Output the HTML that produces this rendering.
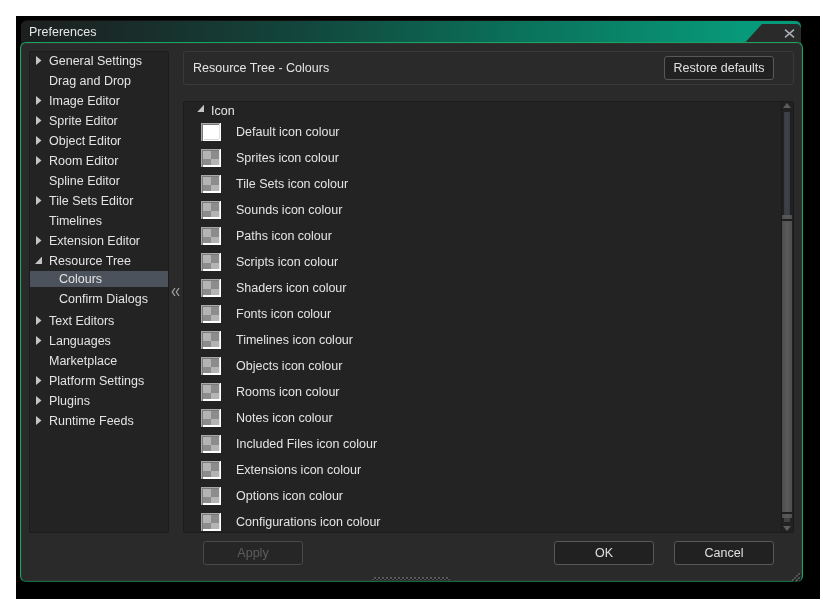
<!DOCTYPE html>
<html><head><meta charset="utf-8">
<style>
*{box-sizing:border-box;margin:0;padding:0}
html,body{width:823px;height:602px;background:#fff;overflow:hidden;position:relative;font-family:"Liberation Sans",sans-serif;font-size:12.5px;color:#e4e4e4}
.abs{position:absolute}
#black{left:16px;top:16px;width:804px;height:583px;background:#000}
#title{left:21px;top:20px;width:780px;height:26px;border-radius:6px 6px 0 0;border-top:1px solid #160f0f;
 background:linear-gradient(90deg,#1d1f1f 0px,#1a2826 80px,#12463c 280px,#0b6e58 480px,#079a7a 724px,#079a7a 780px)}
#tab{left:742px;top:24px;width:59px;height:22px;background:#2a2a2a;clip-path:polygon(20px 0,100% 0,100% 100%,0 100%);border-top-right-radius:5px}
#ttext{left:29px;top:25px;color:#e6e6e6;line-height:14px}
#xbtn{left:784px;top:28.8px;width:11px;height:9px}
#body{left:20px;top:42px;width:783px;height:540px;border:1px solid #17a562;border-bottom-color:#0b6e3e;border-radius:6px;background:#2a2a2a;box-shadow:inset 0 0 0 1px #363030}
.panel{background:#232323;border:1px solid #1b1b1b;border-radius:2px}
#tree{left:29px;top:51px;width:140px;height:482px}
#hdr{left:183px;top:51px;width:611px;height:34px;background:#2a2a2a;border:1px solid #3a3a3a;border-radius:3px}
#htext{left:193px;top:61px;line-height:14px}
#list{left:183px;top:101px;width:611px;height:432px}
.btn{position:absolute;top:541px;height:24px;width:100px;border:1px solid #585858;border-radius:3px;background:#212121;text-align:center;line-height:22px;color:#e0e0e0}
.ti{position:absolute;line-height:14px;white-space:nowrap}
.tri{position:absolute;left:36px;width:5.5px;height:9px;background:#c4c4c4;clip-path:polygon(0 0,100% 50%,0 100%)}
.trid{position:absolute;left:35px;width:7px;height:7.5px;background:#c4c4c4;clip-path:polygon(100% 0,100% 100%,0 100%)}
.sel{position:absolute;left:30px;top:271px;width:138px;height:16px;background:#4b525b}
.row{position:absolute;left:236px;white-space:nowrap;line-height:14px}
.sw{position:absolute;left:201px;width:20px;height:18px;background:
 linear-gradient(#a8a8a8,#a8a8a8) 0 0/1px 18px no-repeat,
 linear-gradient(#a8a8a8,#a8a8a8) 0 0/19px 1px no-repeat,
 linear-gradient(#7a7a7a,#7a7a7a) 1px 1px/1px 17px no-repeat,
 linear-gradient(#7a7a7a,#7a7a7a) 1px 1px/17px 1px no-repeat,
 linear-gradient(#e4e4e4,#e4e4e4) 18px 1px/1px 15px no-repeat,
 #fff}
.sw i{position:absolute;left:2px;top:2px;width:16px;height:14px;
 background:linear-gradient(90deg,#b4b4b4 8px,#8c8c8c 8px) 0 0/16px 8px no-repeat,linear-gradient(90deg,#8c8c8c 8px,#b4b4b4 8px) 0 8px/16px 6px no-repeat}
.sw.white i{height:15px;background:linear-gradient(#d8d8d8,#d8d8d8) 1px 14px/16px 1px no-repeat,#fff}
#vs{left:781px;top:102px;width:12px;height:430px;background:#212121;border-left:1px solid #1a1a1a}
</style></head><body><div id="root" style="position:absolute;left:0;top:0;width:823px;height:602px;will-change:transform">
<div id="black" class="abs"></div>
<div id="title" class="abs"></div>
<div id="tab" class="abs"></div>
<div id="ttext" class="abs">Preferences</div>
<svg id="xbtn" class="abs" viewBox="0 0 11 9"><path d="M1 0.6L10 8.4M10 0.6L1 8.4" stroke="#a9b0ba" stroke-width="1.5"/></svg>
<div id="body" class="abs"></div>
<div id="tree" class="abs panel"></div>
<div id="hdr" class="abs"></div>
<div id="htext" class="abs">Resource Tree - Colours</div>
<div class="btn" style="left:664px;top:56px;width:110px">Restore defaults</div>
<div id="list" class="abs panel"></div>
<div class="trid" style="left:197px;top:104.8px"></div>
<div class="ti" style="left:211px;top:104px">Icon</div>
<div class="tri" style="top:56px"></div><div class="ti" style="left:49px;top:54px">General Settings</div>
<div class="ti" style="left:49px;top:74px">Drag and Drop</div>
<div class="tri" style="top:96px"></div><div class="ti" style="left:49px;top:94px">Image Editor</div>
<div class="tri" style="top:116px"></div><div class="ti" style="left:49px;top:114px">Sprite Editor</div>
<div class="tri" style="top:136px"></div><div class="ti" style="left:49px;top:134px">Object Editor</div>
<div class="tri" style="top:156px"></div><div class="ti" style="left:49px;top:154px">Room Editor</div>
<div class="ti" style="left:49px;top:174px">Spline Editor</div>
<div class="tri" style="top:196px"></div><div class="ti" style="left:49px;top:194px">Tile Sets Editor</div>
<div class="ti" style="left:49px;top:214px">Timelines</div>
<div class="tri" style="top:236px"></div><div class="ti" style="left:49px;top:234px">Extension Editor</div>
<div class="trid" style="top:256.5px"></div><div class="ti" style="left:49px;top:254px">Resource Tree</div>
<div class="sel"></div>
<div class="ti" style="left:59px;top:272px">Colours</div>
<div class="ti" style="left:59px;top:292px">Confirm Dialogs</div>
<div class="tri" style="top:316px"></div><div class="ti" style="left:49px;top:314px">Text Editors</div>
<div class="tri" style="top:336px"></div><div class="ti" style="left:49px;top:334px">Languages</div>
<div class="ti" style="left:49px;top:354px">Marketplace</div>
<div class="tri" style="top:376px"></div><div class="ti" style="left:49px;top:374px">Platform Settings</div>
<div class="tri" style="top:396px"></div><div class="ti" style="left:49px;top:394px">Plugins</div>
<div class="tri" style="top:416px"></div><div class="ti" style="left:49px;top:414px">Runtime Feeds</div>
<div class="sw white" style="top:123px"><i></i></div>
<div class="row" style="top:125px">Default icon colour</div>
<div class="sw" style="top:149px"><i></i></div>
<div class="row" style="top:151px">Sprites icon colour</div>
<div class="sw" style="top:175px"><i></i></div>
<div class="row" style="top:177px">Tile Sets icon colour</div>
<div class="sw" style="top:201px"><i></i></div>
<div class="row" style="top:203px">Sounds icon colour</div>
<div class="sw" style="top:227px"><i></i></div>
<div class="row" style="top:229px">Paths icon colour</div>
<div class="sw" style="top:253px"><i></i></div>
<div class="row" style="top:255px">Scripts icon colour</div>
<div class="sw" style="top:279px"><i></i></div>
<div class="row" style="top:281px">Shaders icon colour</div>
<div class="sw" style="top:305px"><i></i></div>
<div class="row" style="top:307px">Fonts icon colour</div>
<div class="sw" style="top:331px"><i></i></div>
<div class="row" style="top:333px">Timelines icon colour</div>
<div class="sw" style="top:357px"><i></i></div>
<div class="row" style="top:359px">Objects icon colour</div>
<div class="sw" style="top:383px"><i></i></div>
<div class="row" style="top:385px">Rooms icon colour</div>
<div class="sw" style="top:409px"><i></i></div>
<div class="row" style="top:411px">Notes icon colour</div>
<div class="sw" style="top:435px"><i></i></div>
<div class="row" style="top:437px">Included Files icon colour</div>
<div class="sw" style="top:461px"><i></i></div>
<div class="row" style="top:463px">Extensions icon colour</div>
<div class="sw" style="top:487px"><i></i></div>
<div class="row" style="top:489px">Options icon colour</div>
<div class="sw" style="top:513px"><i></i></div>
<div class="row" style="top:515px">Configurations icon colour</div>
<div id="vs" class="abs"></div>
<div class="abs" style="left:783px;top:103px;width:8px;height:5px;background:#5c5c5c;clip-path:polygon(50% 0,100% 100%,0 100%)"></div>
<div class="abs" style="left:784px;top:112px;width:6px;height:103px;background:linear-gradient(90deg,#383c42,#3f444a 50%,#383c42)"></div>
<div class="abs" style="left:782px;top:215px;width:10px;height:303px;background:linear-gradient(90deg,#4e4e4e,#5a5a5a 50%,#4e4e4e)"></div>
<div class="abs" style="left:782px;top:219px;width:10px;height:2px;background:#1f1f1f"></div>
<div class="abs" style="left:782px;top:512px;width:10px;height:2px;background:#1f1f1f"></div>
<div class="abs" style="left:784px;top:518px;width:6px;height:4px;background:#3c4046"></div>
<div class="abs" style="left:783px;top:526px;width:8px;height:5px;background:#5c5c5c;clip-path:polygon(0 0,100% 0,50% 100%)"></div>
<svg class="abs" style="left:171px;top:287px" width="10" height="10" viewBox="0 0 10 10"><path d="M4 1L1.3 5L4 9M8 1L5.3 5L8 9" fill="none" stroke="#a0a0a0" stroke-width="1.3"/></svg>
<div class="abs" style="left:372px;top:577px;width:78px;height:2px;background:repeating-linear-gradient(90deg,transparent 0 2px,#595959 2px 4px)"></div>
<div class="abs" style="left:372px;top:578px;width:78px;height:1px;background:repeating-linear-gradient(90deg,#1c1c1c 0 2px,transparent 2px 4px)"></div>
<div class="abs" style="left:372px;top:579px;width:78px;height:1px;background:repeating-linear-gradient(90deg,#545454 0 2px,#1e1e1e 2px 4px)"></div>
<div class="abs" style="left:798px;top:573px;width:2px;height:2px;background:#525252;box-shadow:1px 1px 0 #1c1c1c"></div><div class="abs" style="left:796px;top:575px;width:2px;height:2px;background:#525252;box-shadow:1px 1px 0 #1c1c1c"></div><div class="abs" style="left:794px;top:577px;width:2px;height:2px;background:#525252;box-shadow:1px 1px 0 #1c1c1c"></div><div class="abs" style="left:792px;top:579px;width:2px;height:2px;background:#525252;box-shadow:1px 1px 0 #1c1c1c"></div><div class="abs" style="left:798px;top:577px;width:2px;height:2px;background:#525252;box-shadow:1px 1px 0 #1c1c1c"></div><div class="abs" style="left:796px;top:579px;width:2px;height:2px;background:#525252;box-shadow:1px 1px 0 #1c1c1c"></div>
<div class="btn" style="left:203px;color:#5e5e5e;border-color:#494949;background:#262626">Apply</div>
<div class="btn" style="left:554px">OK</div>
<div class="btn" style="left:674px">Cancel</div>
</div></body></html>
